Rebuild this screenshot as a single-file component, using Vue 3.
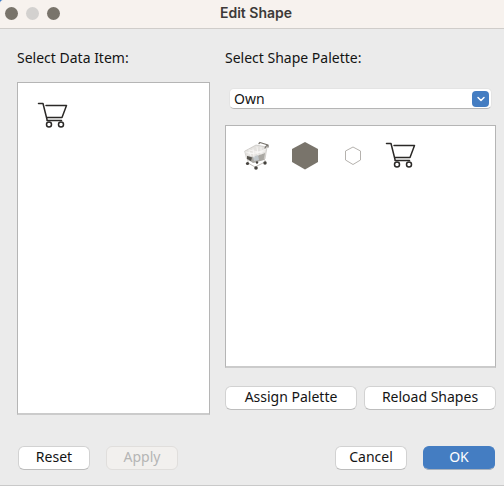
<script setup>
import { ref } from 'vue'

const palette = ref('Own')
const shapes = [
  { id: 'photo', label: 'Grocery cart' },
  { id: 'hexagon', label: 'Filled hexagon' },
  { id: 'outline', label: 'Outlined hexagon' },
  { id: 'cart', label: 'Cart' },
]
</script>

<template>
  <main class="dialog">
    <header class="titlebar">
      <div class="lights">
        <button type="button" class="light" aria-label="Close"></button>
        <button type="button" class="light light-off" aria-label="Minimize" disabled></button>
        <button type="button" class="light" aria-label="Zoom"></button>
      </div>
      <h1>Edit Shape</h1>
    </header>

    <div class="content">
      <section class="column">
        <h2 id="items-label">Select Data Item:</h2>
        <div class="well well-items" role="group" aria-labelledby="items-label">
          <button type="button" class="shape" aria-label="Cart item">
            <svg width="32" height="28" viewBox="0 0 32 28" fill="none" stroke="#2b2927" stroke-width="1.5" stroke-linecap="round" stroke-linejoin="round">
              <path d="M1.5 1.500H6L10 17.500M9 3.500H29.500L25 15.500H10M10 17.500V18.500H24.500" />
              <circle cx="12" cy="22.500" r="2.500" />
              <circle cx="24" cy="22.500" r="2.500" />
            </svg>
          </button>
        </div>
      </section>

      <section class="column column-wide">
        <label class="heading" for="palette">Select Shape Palette:</label>
        <div class="picker">
          <select id="palette" v-model="palette">
            <option>Own</option>
          </select>
          <span class="chevron">
            <svg width="10" height="6" viewBox="0 0 10 6" fill="none" stroke="#fff" stroke-width="1.5" stroke-linecap="round" stroke-linejoin="round">
              <path d="M2 1.500L5 4.500L8 1.500" />
            </svg>
          </span>
        </div>
        <div class="well" role="group" aria-label="Shapes">
          <button v-for="s in shapes" :key="s.id" type="button" class="shape" :aria-label="s.label">
            <svg v-if="s.id === 'photo'" width="28" height="30" viewBox="0 0 28 30" fill="none" stroke-linecap="round" stroke-linejoin="round">
              <path d="M2 10L13 4L24 6L22 18L11 21L4 18Z" fill="#e3e1de" stroke="#c4c1bd" stroke-width=".7" />
              <path d="M4 15L11 16L22 12L21 19L10 22L4 18Z" fill="#aaa8a3" />
              <path d="M4 15L9 16.500L8 20L4 18Z" fill="#55524c" />
              <path d="M10 16L15 14L16 19L11 20Z" fill="#c1c7cb" />
              <path d="M3 11L12 13L23 8M6 10L8 15M10 8L11 16M14 6L15 14M18 6L18 13M5 13L22 10M6 9L20 12" stroke="#faf9f8" stroke-width=".8" />
              <path d="M16 2.500L17 1.500L25 4V6M22 7L24 4" stroke="#77736c" stroke-width="1.300" />
              <path d="M21 18L23 21M5 19V22L12 26L22 21" stroke="#c4c1bc" stroke-width="1" />
              <g fill="#45423d">
                <circle cx="4.500" cy="22.500" r="1.600" />
                <circle cx="13" cy="27" r="1.800" />
                <circle cx="22" cy="22" r="1.700" />
                <circle cx="14" cy="21.500" r="1.200" />
              </g>
            </svg>
            <svg v-else-if="s.id === 'hexagon'" width="28" height="30" viewBox="0 0 28 30">
              <path d="M14 1L27 8V21L14 28.500L1 21V8Z" fill="#79746b" />
            </svg>
            <svg v-else-if="s.id === 'outline'" width="28" height="30" viewBox="0 0 28 30" fill="none" stroke="#b5b2ae">
              <path d="M14 6L21.500 10V19L14 23.500L6.500 19V10Z" />
            </svg>
            <svg v-else width="32" height="28" viewBox="0 0 32 28" fill="none" stroke="#2b2927" stroke-width="1.5" stroke-linecap="round" stroke-linejoin="round">
              <path d="M1.5 1.500H6L10 17.500M9 3.500H29.500L25 15.500H10M10 17.500V18.500H24.500" />
              <circle cx="12" cy="22.500" r="2.500" />
              <circle cx="24" cy="22.500" r="2.500" />
            </svg>
          </button>
        </div>
        <div class="actions">
          <button type="button" class="btn">Assign Palette</button>
          <button type="button" class="btn">Reload Shapes</button>
        </div>
      </section>
    </div>

    <footer class="footer">
      <button type="button" class="btn btn-small">Reset</button>
      <button type="button" class="btn btn-small" disabled>Apply</button>
      <span class="spacer"></span>
      <button type="button" class="btn btn-small">Cancel</button>
      <button type="button" class="btn btn-small btn-primary">OK</button>
    </footer>
  </main>
</template>

<style>
body {
  margin: 0;
  background: #3f7cc6;
}
</style>

<style scoped>
* {
  box-sizing: border-box;
}
.dialog {
  display: flex;
  flex-direction: column;
  min-height: 100vh;
  overflow: hidden;
  background: #ebebeb;
  border-bottom: 1px solid #c9c9c9;
  border-top-left-radius: 4px;
  color: #141414;
  font: 400 14px/20px "Noto Sans", "Open Sans", sans-serif;
}
.titlebar {
  display: grid;
  grid-template-columns: 1fr auto 1fr;
  align-items: center;
  height: 29px;
  padding: 0 5px 2px;
  background: #f7f2ee;
  border-bottom: 1px solid #d0cdca;
}
.lights {
  display: flex;
  gap: 8px;
}
.light {
  width: 13px;
  height: 13px;
  padding: 0;
  border: 0;
  border-radius: 50%;
  background: #79746b;
}
.light-off {
  background: #d3d1cf;
}
h1 {
  margin: 0;
  padding-left: 8px;
  color: #3d3a38;
  font: 600 14px/20px Inter, sans-serif;
}
.content {
  display: flex;
  flex: 1;
  gap: 15px;
  padding: 19px 8px 0 17px;
}
.column {
  display: flex;
  flex: 193 1 0;
  flex-direction: column;
  min-width: 0;
}
.column-wide {
  flex-grow: 271;
}
h2,
.heading {
  margin: 0;
  font: inherit;
}
h2 {
  margin-bottom: 14px;
}
.well {
  display: flex;
  flex: 1;
  flex-wrap: wrap;
  align-content: flex-start;
  padding: 6px 7px;
  background: #fff;
  border: 1px solid #b5b5b5;
  border-bottom: 2px solid #cbcbcb;
}
.well-items {
  padding: 9px 11px;
}
.shape {
  display: grid;
  place-items: center;
  width: 48px;
  height: 48px;
  padding: 0;
  border: 0;
  background: none;
}
.shape svg {
  display: block;
}
.picker {
  display: grid;
  align-items: center;
  margin: 20px 4px 16px;
}
.picker > * {
  grid-area: 1 / 1;
}
select {
  width: 100%;
  height: 21px;
  padding: 0 24px 0 4px;
  appearance: none;
  border: 1px solid #e4e4e4;
  border-bottom-color: #b5b5b5;
  border-radius: 5px;
  background: #fff;
  color: inherit;
  font: inherit;
  line-height: 19px;
}
.chevron {
  display: grid;
  place-items: center;
  justify-self: end;
  width: 17px;
  height: 16px;
  margin-right: 3px;
  border-radius: 4px;
  background: #447dc2;
  pointer-events: none;
}
.actions {
  display: flex;
  gap: 7px;
  padding: 18px 0 5px;
}
.btn {
  flex: 1;
  height: 24px;
  padding: 0 0 2px;
  border: 1px solid #d2d2d2;
  border-bottom-color: #bdbdbd;
  border-radius: 6px;
  background: #fff;
  color: inherit;
  font: inherit;
  white-space: nowrap;
}
.btn:disabled {
  border-color: #e0dedc;
  background: #f2f0ee;
  color: #b5b5b5;
}
.btn-small {
  flex: 0 0 72px;
}
.btn-primary {
  border-color: #447dc2;
  border-bottom-color: #a9b2bd;
  background: #447dc2;
  color: #fff;
}
.footer {
  display: flex;
  gap: 16px;
  padding: 31px 9px 15px 18px;
}
.spacer {
  flex: 1;
}
</style>
